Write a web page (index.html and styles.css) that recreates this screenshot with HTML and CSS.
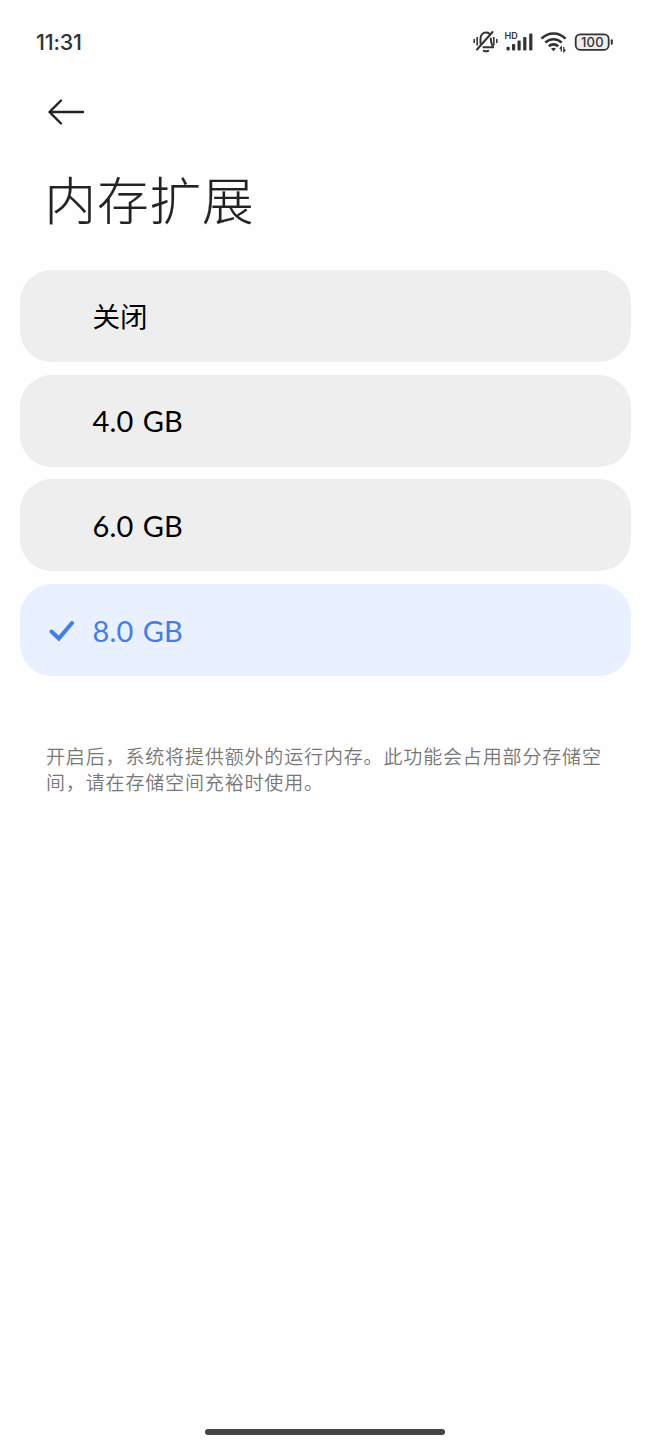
FILE: index.html
```html
<!DOCTYPE html>
<html lang="zh-CN">
<head>
    <meta charset="UTF-8">
    <title>内存扩展</title>
    <link rel="stylesheet" href="styles.css">
</head>
<body>
    <div class="statusbar">
        <span class="time">11:31</span>
        <!-- 静音 信号 wifi 电量 -->
        <svg class="icons" width="142" height="28" viewBox="0 0 142 28">
            <g fill="none" stroke="#333" stroke-linecap="round">
                <path d="M1.200 11.500v3M4.200 9.500v7.500M20.800 9.500v7.500M23.800 11.500v3" stroke-width="1.600"/>
                <path d="M7.500 15.500V11c0-4 2.500-6.500 5.500-6.500 1.500 0 2.500.4 3.400 1.200M17.800 10.500c0 4.500.3 5.500 2.400 8.800H10.500" stroke-width="2" stroke-linejoin="round"/>
                <path d="M4 21.500L19.500 4" stroke-width="2"/>
                <path d="M10.800 22.800q2.200 1 4.400 0" stroke-width="2"/>
            </g>
            <g fill="#333">
                <rect x="33.500" y="18.700" width="3.200" height="3.800" rx="1"/>
                <rect x="39" y="16" width="3.200" height="6.500" rx="1"/>
                <rect x="44.500" y="12.500" width="3.200" height="10" rx="1"/>
                <rect x="50.200" y="9" width="3.200" height="13.500" rx="1"/>
                <rect x="56.200" y="5.500" width="3.200" height="17" rx="1"/>
            </g>
            <text class="hd" x="31.500" y="11.200">HD</text>
            <g fill="none" stroke="#333" stroke-width="2.600">
                <path d="M68.500 10.700a16.500 16.500 0 0 1 24 0"/>
                <path d="M72.300 14.700a11.500 11.500 0 0 1 16.400 0"/>
                <path d="M75.800 18.300a6.800 6.800 0 0 1 9.400 0"/>
            </g>
            <path d="M78 20.600q2.500-1.600 5 0l-2.500 2.700z" fill="#333"/>
            <path d="M88.300 23.500v-4.500l-1.600 1.800M90.800 19v4.500l1.600-1.800" fill="none" stroke="#333" stroke-width="1.300"/>
            <rect x="102.700" y="6.400" width="33" height="15.400" rx="4.500" fill="#eee" stroke="#333" stroke-width="1.800"/>
            <path d="M138.800 12.300v3.400" stroke="#333" stroke-width="2" stroke-linecap="round"/>
            <text class="power" x="119.400" y="18.800">100</text>
        </svg>
    </div>

    <div class="header">
        <svg class="back" width="38" height="28" viewBox="0 0 38 28">
            <path d="M14 2.500L2.500 14L14 25.500M2.500 14H36" fill="none" stroke="#222" stroke-width="2.400" stroke-linecap="round" stroke-linejoin="round"/>
        </svg>
        <h1>内存扩展</h1>
    </div>

    <ul class="list">
        <li>关闭</li>
        <li class="gb">4.0 GB</li>
        <li class="gb">6.0 GB</li>
        <li class="gb active">
            <svg class="check" width="26" height="22" viewBox="0 0 26 22">
                <path d="M2.500 11.500L9.800 18.500L23 3" fill="none" stroke="#437deb" stroke-width="4" stroke-linecap="round"/>
            </svg>
            8.0 GB
        </li>
    </ul>

    <p class="tips">开启后，系统将提供额外的运行内存。此功能会占用部分存储空间，请在存储空间充裕时使用。</p>

    <div class="homebar"></div>
</body>
</html>
```

FILE: styles.css
```css
body,ul,li,p,h1{margin:0;padding:0;}
body{display:flex;flex-direction:column;box-sizing:border-box;height:1445px;background:#fefefe;font-family:Lato,"Noto Sans CJK SC",sans-serif;color:#000;}
ul{list-style-type:none;}

.statusbar{display:flex;justify-content:space-between;align-items:center;height:28px;padding:28px 35px 0 36px;}
.time{font:500 21.5px/28px Inter,sans-serif;letter-spacing:-.2px;color:#333;}
.icons{display:block;}
.hd{font:600 9px Inter,sans-serif;fill:#333;}
.power{font:500 13px Inter,sans-serif;letter-spacing:.2px;fill:#333;text-anchor:middle;}

.header{padding:42px 46.500px 0;}
.back{display:block;}
h1{margin:34px 0 0 -2px;height:76px;line-height:76px;font-family:"Noto Sans CJK SC",sans-serif;font-size:51.500px;font-weight:300;letter-spacing:1px;color:#222;-webkit-text-stroke:.2px #222;}

.list{display:grid;gap:12.800px;margin:33.800px 19.500px 0;}
.list li{display:flex;align-items:center;position:relative;box-sizing:border-box;height:92px;padding:0 0 1px 73px;border-radius:32px;background:#eee;font-size:27.500px;}
.list .gb{padding-bottom:.2px;font-size:29px;letter-spacing:.2px;word-spacing:1.500px;}
.list .active{background:#e9f0ff;color:#437deb;}
.check{position:absolute;left:29px;top:36px;}

.tips{margin:67px 40px 0 46px;font-size:19px;line-height:26px;letter-spacing:.85px;font-weight:350;font-family:"Noto Sans CJK SC",sans-serif;color:#777;}
.homebar{width:240px;height:6px;margin:auto auto 10px;border-radius:3px;background:#444;}
```
